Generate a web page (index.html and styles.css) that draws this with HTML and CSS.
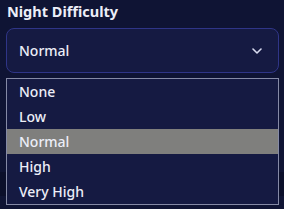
FILE: index.html
```html
<!DOCTYPE html>
<html lang="en">
    <head>
        <meta charset="UTF-8">
        <title>Night Difficulty</title>
        <link rel="stylesheet" href="styles.css">
    </head>
    <body>
        <section class="field">
            <label class="field-label">Night Difficulty</label>
            <div class="select">
                <span class="select-value">Normal</span>
                <svg class="chevron" width="10" height="6" viewBox="0 0 10 6">
                    <path d="M1 1 L5 5 L9 1" fill="none" stroke="#d8dbf0" stroke-width="1.6" stroke-linecap="round" stroke-linejoin="round"/>
                </svg>
            </div>
            <div class="next-row"></div>

            <ul class="options">
                <li>None</li>
                <li>Low</li>
                <li class="selected">Normal</li>
                <li>High</li>
                <li>Very High</li>
            </ul>
        </section>
    </body>
</html>
```

FILE: styles.css
```css
* {
    padding: 0;
    margin: 0;
    box-sizing: border-box;
}

body {
    width: 284px;
    height: 209px;
    background-color: #0f1434;
    font-family: "Noto Sans", sans-serif;
    color: #eceef8;
    overflow: hidden;
}

.field {
    position: relative;
    padding: 2px 5px 0 6px;
}

.field-label {
    display: block;
    font-size: 14.5px;
    font-weight: 700;
    line-height: 19px;
    padding-left: 1px;
}

.select {
    margin-top: 7px;
    height: 45px;
    border: 1px solid #2f3587;
    border-radius: 8px;
    background-color: #151a42;
    display: flex;
    align-items: center;
    justify-content: space-between;
    padding: 0 16px 0 12px;
    font-size: 14px;
    font-weight: 500;
}

.chevron {
    margin-top: 1px;
}

/* something darker under the list */
.next-row {
    margin: 99px -5px 0 -6px;
    height: 24px;
    background-color: #0b0f2a;
}

.options {
    position: absolute;
    top: 78px;
    left: 6px;
    right: 5px;
    list-style: none;
    background-color: #151a42;
    border: 1px solid #858aa6;
    font-size: 14px;
    font-weight: 500;
}

.options li {
    height: 25px;
    line-height: 25px;
    padding-left: 12px;
}

.options li.selected {
    background-color: #7f7f7d;
}
```
